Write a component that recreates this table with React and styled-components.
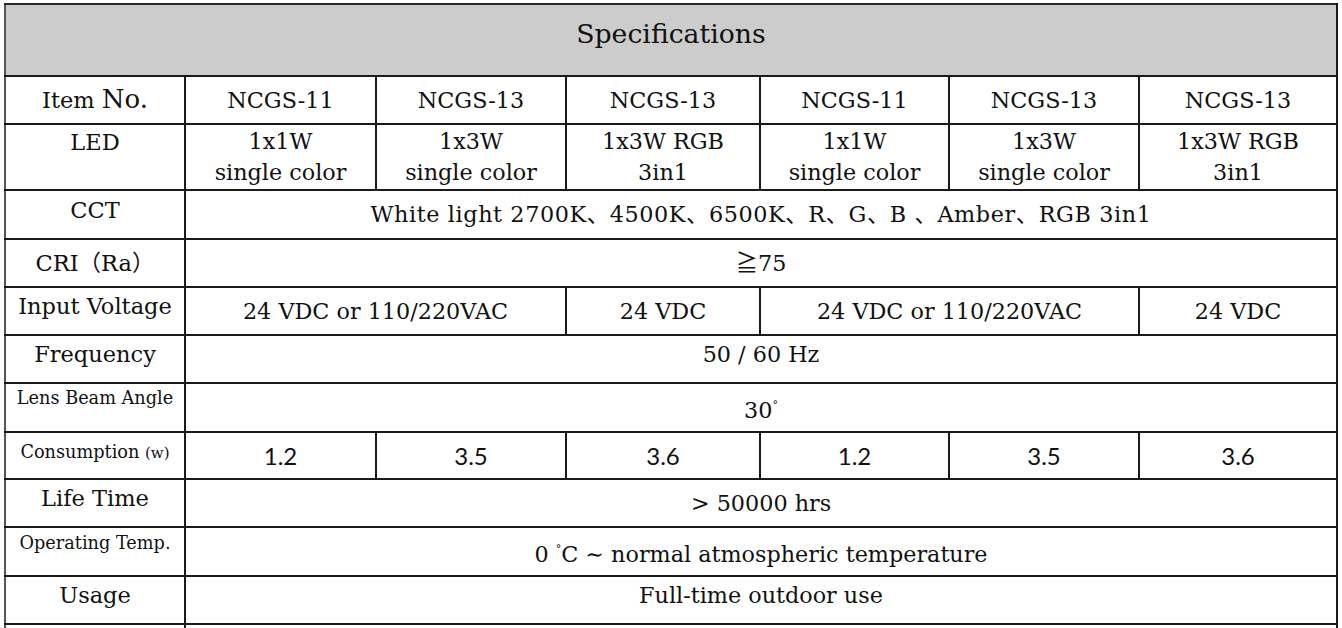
import React from 'react';
import styled, { createGlobalStyle } from 'styled-components';

const GlobalStyle = createGlobalStyle`
  html, body {
    margin: 0;
    padding: 0;
    background: #ffffff;
    overflow: hidden;
  }
  body {
    font-family: "DejaVu Serif", "Noto Sans CJK SC", serif;
    color: #111111;
  }
`;

const Page = styled.div`
  width: 1342px;
  height: 628px;
  padding: 3px 0 0 4px;
  box-sizing: border-box;
  overflow: hidden;
`;

const Table = styled.table`
  border-collapse: collapse;
  table-layout: fixed;
  width: 1332px;
  border-left: 2px solid #555555;
  border-right: 2px solid #1a1a1a;
  border-top: 2px solid #2a2a2a;
`;

const Row = styled.tr`
  height: ${p => p.$h}px;
`;

const HeaderCell = styled.th`
  background: #cccccc;
  border-bottom: 2px solid #1a1a1a;
  font-weight: normal;
  font-size: 26.7px;
  padding: 0 0 14px;
  text-align: center;
  vertical-align: middle;
`;

const LabelCell = styled.td`
  border: 2px solid #1a1a1a;
  border-left-color: #555555;
  font-size: ${p => p.$size || 22.5}px;
  text-align: center;
  vertical-align: middle;
  padding: 0 0 ${p => p.$shift || 0}px;
  white-space: nowrap;
  line-height: 1.2;
`;

const ValueCell = styled.td`
  border: 2px solid #1a1a1a;
  font-family: ${p => (p.$sans ? '"Lato", "Liberation Sans", sans-serif' : '"DejaVu Serif", "Noto Sans CJK SC", serif')};
  font-size: ${p => (p.$sans ? 24 : 22.3)}px;
  letter-spacing: ${p => p.$spread || 0}px;
  line-height: 31px;
  text-align: center;
  vertical-align: middle;
  padding: 0 0 ${p => p.$shift || 0}px;
  white-space: nowrap;
`;

const Big = styled.span`
  font-size: 26px;
`;

const Small = styled.span`
  font-size: 15px;
`;

const Deg = styled.sup`
  font-size: 11px;
  vertical-align: 9px;
`;

const widths = [180, 191, 190, 194, 189, 190, 198];

const models = ['NCGS-11', 'NCGS-13', 'NCGS-13', 'NCGS-11', 'NCGS-13', 'NCGS-13'];
const leds = [
  ['1x1W', 'single color'],
  ['1x3W', 'single color'],
  ['1x3W RGB', '3in1'],
  ['1x1W', 'single color'],
  ['1x3W', 'single color'],
  ['1x3W RGB', '3in1'],
];
const power = ['1.2', '3.5', '3.6', '1.2', '3.5', '3.6'];

export default function App() {
  return (
    <Page>
      <GlobalStyle />
      <Table>
        <colgroup>
          {widths.map((w, i) => (
            <col key={i} style={{ width: w }} />
          ))}
        </colgroup>
        <tbody>
          <Row $h={72}>
            <HeaderCell colSpan={7}>Specifications</HeaderCell>
          </Row>
          <Row $h={48}>
            <LabelCell>
              Item <Big>No.</Big>
            </LabelCell>
            {models.map((m, i) => (
              <ValueCell key={i}>{m}</ValueCell>
            ))}
          </Row>
          <Row $h={66}>
            <LabelCell $shift={30}>LED</LabelCell>
            {leds.map((l, i) => (
              <ValueCell key={i}>
                {l[0]}
                <br />
                {l[1]}
              </ValueCell>
            ))}
          </Row>
          <Row $h={49}>
            <LabelCell $shift={8}>CCT</LabelCell>
            <ValueCell colSpan={6} $spread={0.6}>
              White light 2700K、4500K、6500K、R、G、B 、Amber、RGB 3in1
            </ValueCell>
          </Row>
          <Row $h={48}>
            <LabelCell>CRI（Ra）</LabelCell>
            <ValueCell colSpan={6}>≧75</ValueCell>
          </Row>
          <Row $h={48}>
            <LabelCell $shift={10}>Input Voltage</LabelCell>
            <ValueCell colSpan={2}>24 VDC or 110/220VAC</ValueCell>
            <ValueCell>24 VDC</ValueCell>
            <ValueCell colSpan={2}>24 VDC or 110/220VAC</ValueCell>
            <ValueCell>24 VDC</ValueCell>
          </Row>
          <Row $h={48}>
            <LabelCell $shift={10}>Frequency</LabelCell>
            <ValueCell colSpan={6} $shift={10}>
              50 / 60 Hz
            </ValueCell>
          </Row>
          <Row $h={49}>
            <LabelCell $size={17.7} $shift={18}>
              Lens Beam Angle
            </LabelCell>
            <ValueCell colSpan={6}>
              30<Deg>°</Deg>
            </ValueCell>
          </Row>
          <Row $h={47}>
            <LabelCell $size={17.7} $shift={6}>
              Consumption <Small>(w)</Small>
            </LabelCell>
            {power.map((p, i) => (
              <ValueCell key={i} $sans>
                {p}
              </ValueCell>
            ))}
          </Row>
          <Row $h={48}>
            <LabelCell $shift={10}>Life Time</LabelCell>
            <ValueCell colSpan={6}>&gt; 50000 hrs</ValueCell>
          </Row>
          <Row $h={49}>
            <LabelCell $size={17.7} $shift={16}>
              Operating Temp.
            </LabelCell>
            <ValueCell colSpan={6}>
              0 <Deg>°</Deg>C ∼ normal atmospheric temperature
            </ValueCell>
          </Row>
          <Row $h={48}>
            <LabelCell $shift={10}>Usage</LabelCell>
            <ValueCell colSpan={6} $shift={10}>
              Full-time outdoor use
            </ValueCell>
          </Row>
          <Row $h={48}>
            <LabelCell />
            <ValueCell colSpan={6} />
          </Row>
        </tbody>
      </Table>
    </Page>
  );
}
